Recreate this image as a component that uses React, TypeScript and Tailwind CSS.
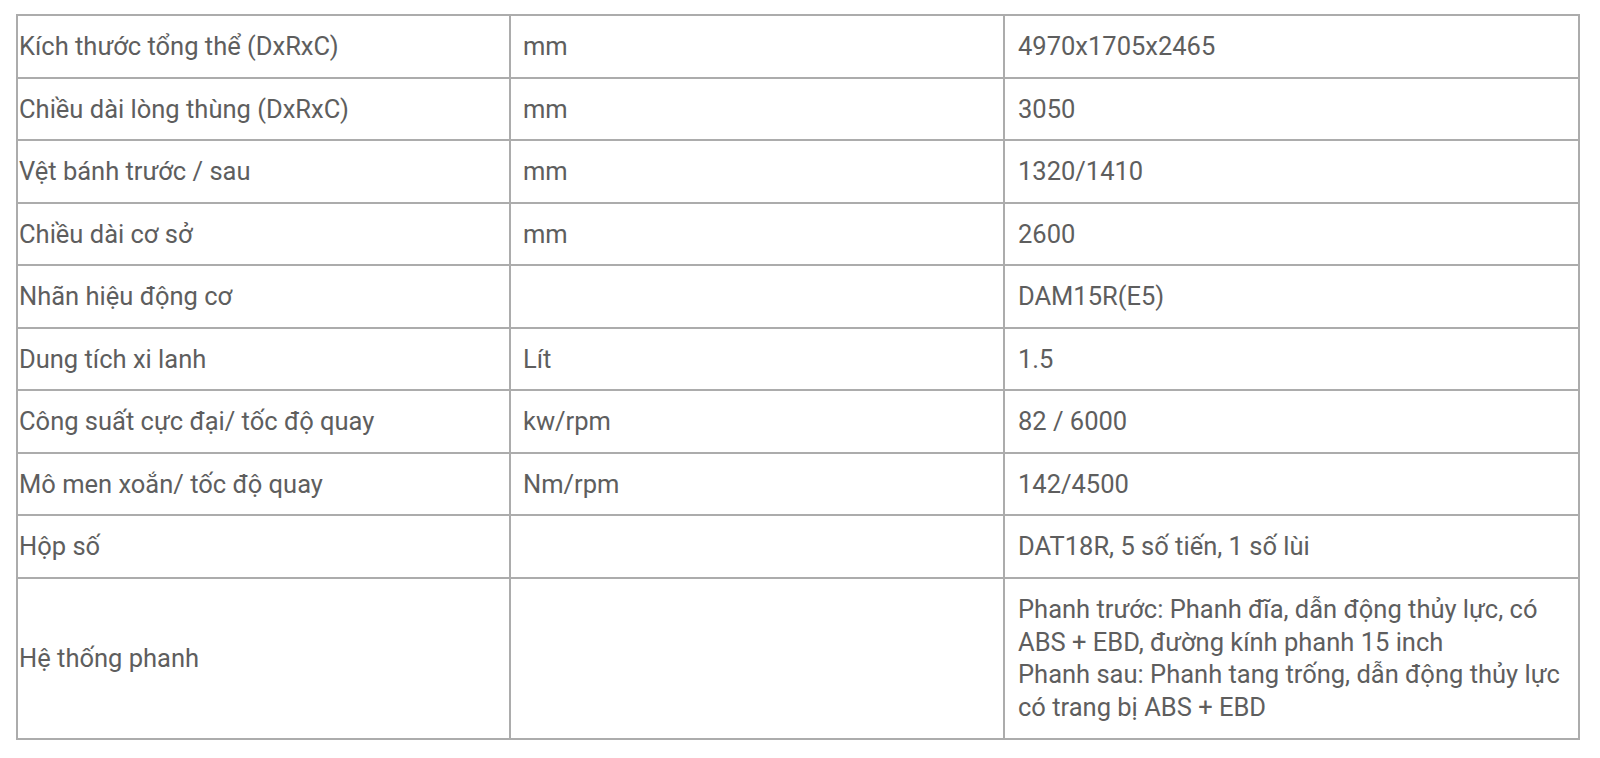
import React from "react";

const rows: [string, string, string][] = [
  ["Kích thước tổng thể (DxRxC)", "mm", "4970x1705x2465"],
  ["Chiều dài lòng thùng (DxRxC)", "mm", "3050"],
  ["Vệt bánh trước / sau", "mm", "1320/1410"],
  ["Chiều dài cơ sở", "mm", "2600"],
  ["Nhãn hiệu động cơ", "", "DAM15R(E5)"],
  ["Dung tích xi lanh", "Lít", "1.5"],
  ["Công suất cực đại/ tốc độ quay", "kw/rpm", "82 / 6000"],
  ["Mô men xoắn/ tốc độ quay", "Nm/rpm", "142/4500"],
  ["Hộp số", "", "DAT18R, 5 số tiến, 1 số lùi"],
];

export default function App() {
  return (
    <div
      className="w-[1600px] h-[758px] bg-white pt-[14px] pl-[16px]"
      style={{ fontFamily: "Roboto, 'Liberation Sans', sans-serif" }}
    >
      <table className="border-collapse table-fixed w-[1562px] text-[25.5px] text-[#5e5e5e]">
        <colgroup>
          <col className="w-[493px]" />
          <col className="w-[494px]" />
          <col className="w-[575px]" />
        </colgroup>
        <tbody>
          {rows.map(([a, b, c]) => (
            <tr key={a} className="h-[62.5px]">
              <td className="border-2 border-[#acacac] pl-[1px] align-middle leading-[30px]">{a}</td>
              <td className="border-2 border-[#acacac] pl-[12px] align-middle leading-[30px]">{b}</td>
              <td className="border-2 border-[#acacac] pl-[13px] align-middle leading-[30px]">{c}</td>
            </tr>
          ))}
          <tr className="h-[161px]">
            <td className="border-2 border-[#acacac] pl-[1px] align-middle">Hệ thống phanh</td>
            <td className="border-2 border-[#acacac] pl-[12px] align-middle"></td>
            <td className="border-2 border-[#acacac] pl-[13px] pr-[6px] align-middle leading-[32.5px]">
              Phanh trước: Phanh đĩa, dẫn động thủy lực, có ABS + EBD, đường kính phanh 15 inch
              <br />
              Phanh sau: Phanh tang trống, dẫn động thủy lực có trang bị ABS + EBD
            </td>
          </tr>
        </tbody>
      </table>
    </div>
  );
}
